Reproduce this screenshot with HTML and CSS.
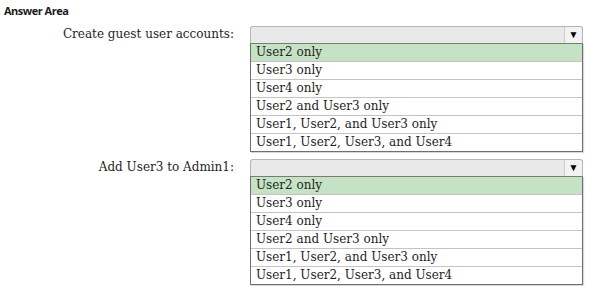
FILE: index.html
```html
<!DOCTYPE html>
<html lang="en">
<head>
    <meta charset="UTF-8">
    <title>Answer Area</title>
    <link rel="stylesheet" href="styles.css">
</head>
<body>
    <div class="answer-area">
        <h1 class="title">Answer Area</h1>

        <div class="question">
            <div class="label">Create guest user accounts:</div>
            <div class="dropdown">
                <div class="select">
                    <span class="arrow">&#9660;</span>
                </div>
                <ul class="options">
                    <li class="selected">User2 only</li>
                    <li>User3 only</li>
                    <li>User4 only</li>
                    <li>User2 and User3 only</li>
                    <li>User1, User2, and User3 only</li>
                    <li>User1, User2, User3, and User4</li>
                </ul>
            </div>
        </div>

        <div class="question">
            <div class="label">Add User3 to Admin1:</div>
            <div class="dropdown">
                <div class="select">
                    <span class="arrow">&#9660;</span>
                </div>
                <ul class="options">
                    <li class="selected">User2 only</li>
                    <li>User3 only</li>
                    <li>User4 only</li>
                    <li>User2 and User3 only</li>
                    <li>User1, User2, and User3 only</li>
                    <li>User1, User2, User3, and User4</li>
                </ul>
            </div>
        </div>
    </div>
</body>
</html>
```

FILE: styles.css
```css
body {
    margin: 0;
    background: #ffffff;
    color: #222222;
}

.answer-area {
    padding: 3px 0 0 4px;
}

.title {
    margin: 0 0 8px 0;
    font-family: "Open Sans", sans-serif;
    font-size: 11px;
    font-weight: bold;
    letter-spacing: -0.5px;
    color: #1a1a1a;
}

.question {
    display: flex;
    align-items: flex-start;
    gap: 16px;
    margin-bottom: 7px;
}

.label {
    width: 230px;
    height: 17px;
    line-height: 17px;
    text-align: right;
    font-family: "DejaVu Serif", serif;
    font-size: 12px;
    color: #1e1e1e;
}

.dropdown {
    width: 333px;
}

/* Closed select header */
.select {
    display: flex;
    justify-content: flex-end;
    height: 16px;
    background: #e9e9e9;
    border: 1px solid #b5b5b5;
    border-bottom: none;
    border-radius: 3px 3px 0 0;
}

.arrow {
    width: 17px;
    border-left: 1px solid #cfcfcf;
    background: #f2f2f2;
    border-radius: 0 3px 0 0;
    font-size: 10px;
    line-height: 16px;
    text-align: center;
    color: #000000;
}

.options {
    list-style: none;
    margin: 0;
    padding: 0;
    border: 1px solid #6f6f6f;
    border-top: 1px solid #7a7a7a;
    box-shadow: 1px 1px 1px rgba(0, 0, 0, 0.15);
}

.options li {
    height: 17px;
    line-height: 17px;
    padding-left: 5px;
    border-bottom: 1px solid #c4c4c4;
    font-family: "DejaVu Serif", serif;
    font-size: 12px;
    color: #1e1e1e;
}

.options li:last-child {
    border-bottom: none;
}

.options .selected {
    background: #c6e2c4;
}
```
